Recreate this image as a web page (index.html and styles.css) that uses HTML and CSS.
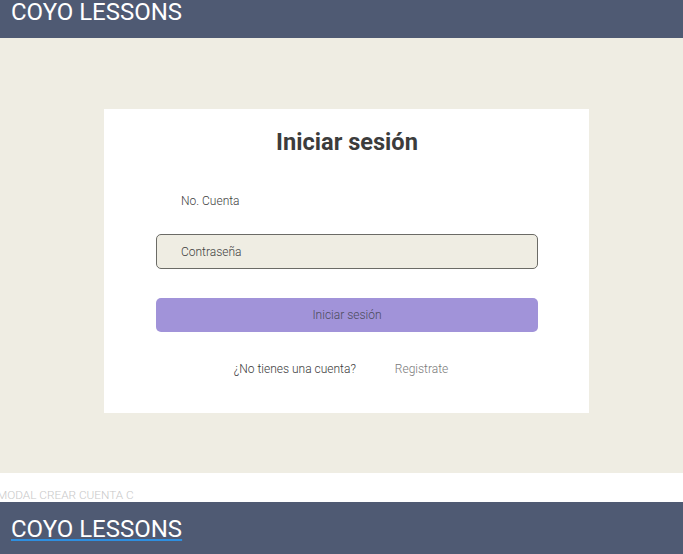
FILE: index.html
```html
<!DOCTYPE html>
<html lang="es">
<head>
<meta charset="utf-8">
<link rel="stylesheet" href="styles.css">
</head>
<body>
<header class="topbar"><span class="brand">COYO LESSONS</span></header>
<main class="stage">
  <section class="card">
    <h1 class="title">Iniciar sesión</h1>
    <div class="field field-plain">No. Cuenta</div>
    <div class="field field-boxed">Contraseña</div>
    <div class="btn">Iniciar sesión</div>
    <div class="links">
      <span class="muted">¿No tienes una cuenta?</span>
      <span class="link">Registrate</span>
    </div>
  </section>
</main>
<div class="strip"><span class="strip-text">MODAL CREAR CUENTA C</span></div>
<footer class="bottombar"><a class="brand brand-link" href="#">COYO LESSONS</a></footer>
</body>
</html>
```
FILE: styles.css
```css
* { box-sizing: border-box; }
html, body { margin: 0; padding: 0; }
body {
  width: 683px;
  height: 554px;
  overflow: hidden;
  font-family: Roboto, "Liberation Sans", sans-serif;
  background: #ffffff;
}
.topbar {
  height: 38px;
  background: #4f5a73;
  padding: 0 11px;
}
.brand {
  display: block;
  font-size: 24px;
  line-height: 24px;
  color: #ffffff;
  font-weight: 400;
}
.stage {
  height: 435px;
  background: #efede3;
  padding-top: 71px;
  padding-left: 104px;
}
.card {
  width: 485px;
  height: 304px;
  background: #ffffff;
  padding: 18px 51px 0 52px;
}
.title {
  margin: 0;
  text-align: center;
  font-size: 23.6px;
  line-height: 30px;
  font-weight: 700;
  color: #3c3c3c;
}
.field {
  height: 35px;
  border-radius: 5px;
  padding: 0 24px;
  display: flex;
  align-items: center;
  font-size: 12px;
  font-weight: 300;
  color: #3f3f3f;
}
.field-plain {
  margin-top: 26px;
  border: 1px solid transparent;
}
.field-boxed {
  margin-top: 16px;
  background: #efede3;
  border: 1px solid #6b6b66;
}
.btn {
  margin-top: 29px;
  height: 34px;
  border-radius: 5px;
  background: #a193d9;
  display: flex;
  align-items: center;
  justify-content: center;
  font-size: 12px;
  font-weight: 300;
  color: #4b4b5a;
}
.links {
  margin-top: 30px;
  display: flex;
  justify-content: center;
  gap: 39px;
  padding-right: 12px;
  font-size: 12px;
  font-weight: 300;
  line-height: 14px;
}
.muted { color: #3a3a3a; }
.link { color: #7a7a7a; }
.strip {
  height: 29px;
  background: #ffffff;
  padding-top: 16px;
  overflow: hidden;
}
.strip-text {
  display: block;
  margin-left: -3px;
  font-size: 11.8px;
  line-height: 12px;
  font-weight: 300;
  color: #c8c8c8;
  white-space: nowrap;
}
.bottombar {
  height: 52px;
  background: #4f5a73;
  padding: 15px 11px 0;
}
.brand-link {
  display: inline-block;
  text-decoration: underline;
  text-decoration-color: #2e8fe0;
  text-decoration-thickness: 2px;
  text-underline-offset: 2px;
}
```
